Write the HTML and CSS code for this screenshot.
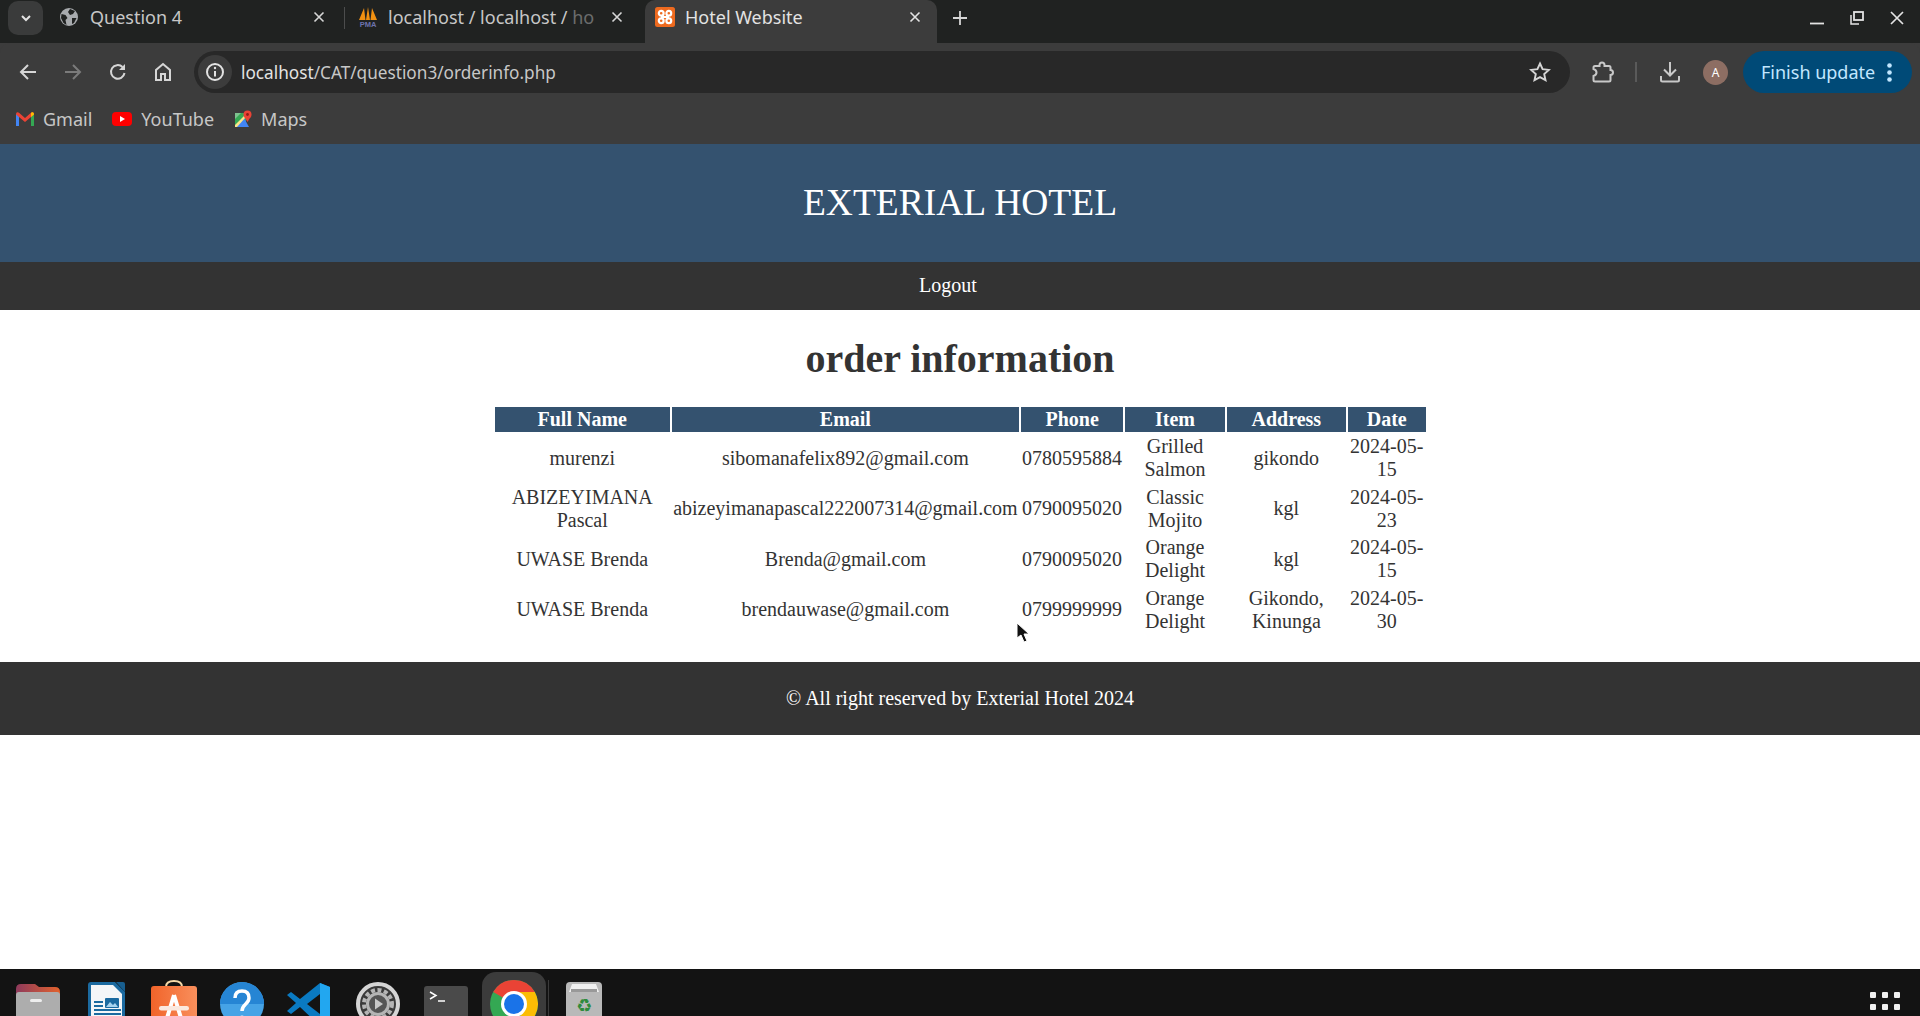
FILE: index.html
```html
<!DOCTYPE html>
<html lang="en">
<head>
<meta charset="utf-8">
<title>Hotel Website</title>
<link rel="stylesheet" href="styles.css">
</head>
<body>
<div class="screen">
  <div class="browser">
    <div class="tabstrip">
      <div class="tablist-btn"><svg width="14" height="14" viewBox="0 0 14 14"><path d="M3 5l4 4 4-4" fill="none" stroke="#e3e3e3" stroke-width="2"/></svg></div>
      <div class="tab tab-one">
        <svg class="favicon" width="18" height="18" viewBox="0 0 18 18"><circle cx="9" cy="9" r="9" fill="#a8abae"/><path d="M1.500 6l4 1 2 3-2 2 1 5-3-2-2.500-5zM10 1l5 2-2 3-3 1-2-3zM12 10l4.500 0-2.500 5-2 1z" fill="#202221"/></svg>
        <span class="tab-title">Question 4</span>
        <svg class="close" width="12" height="12" viewBox="0 0 12 12"><path d="M1.500 1.500l9 9M10.500 1.500l-9 9" stroke="#d6d6d6" stroke-width="1.600"/></svg>
      </div>
      <div class="tab-sep"></div>
      <div class="tab tab-two">
        <svg class="favicon" width="20" height="20" viewBox="0 0 20 20"><path d="M1 13L6 1l1.500 12zM8 13L10 0l2 13zM12.500 13L14 1l5 12z" fill="#f29111"/><text class="pma" x="10" y="19.500" text-anchor="middle">PMA</text></svg>
        <span class="tab-title">localhost / localhost / <span class="faded">ho</span></span>
        <svg class="close" width="12" height="12" viewBox="0 0 12 12"><path d="M1.500 1.500l9 9M10.500 1.500l-9 9" stroke="#d6d6d6" stroke-width="1.600"/></svg>
      </div>
      <div class="tab tab-active">
        <svg class="favicon" width="20" height="20" viewBox="0 0 20 20"><rect width="20" height="20" rx="2.500" fill="#ee6a1f"/><g fill="none" stroke="#fff" stroke-width="2.200"><circle cx="6.200" cy="6.200" r="2.400"/><circle cx="13.800" cy="6.200" r="2.400"/><circle cx="6.200" cy="13.800" r="2.400"/><circle cx="13.800" cy="13.800" r="2.400"/></g><path d="M6 10h8" stroke="#fff" stroke-width="2"/></svg>
        <span class="tab-title bright">Hotel Website</span>
        <svg class="close" width="12" height="12" viewBox="0 0 12 12"><path d="M1.500 1.500l9 9M10.500 1.500l-9 9" stroke="#e3e3e3" stroke-width="1.600"/></svg>
      </div>
      <svg class="newtab" width="14" height="14" viewBox="0 0 14 14"><path d="M7 0v14M0 7h14" stroke="#d6d6d6" stroke-width="1.800"/></svg>
      <div class="winctl">
        <svg width="14" height="14" viewBox="0 0 14 14"><path d="M0 12.500h14" stroke="#e3e3e3" stroke-width="1.800"/></svg>
        <svg width="14" height="14" viewBox="0 0 14 14"><path d="M1 4v9h8" fill="none" stroke="#e3e3e3" stroke-width="1.500"/><rect x="4" y="1" width="9" height="8" fill="none" stroke="#e3e3e3" stroke-width="1.800"/></svg>
        <svg width="14" height="14" viewBox="0 0 14 14"><path d="M1 1l12 12M13 1L1 13" stroke="#e3e3e3" stroke-width="1.700"/></svg>
      </div>
    </div>
    <div class="toolbar">
      <svg class="nav-icon" width="20" height="20" viewBox="0 0 20 20"><path d="M18 10H3M10 3l-7 7 7 7" fill="none" stroke="#d6d6d6" stroke-width="2"/></svg>
      <svg class="nav-icon" width="20" height="20" viewBox="0 0 20 20"><path d="M2 10h15M10 3l7 7-7 7" fill="none" stroke="#7b7b7b" stroke-width="2"/></svg>
      <svg class="nav-icon" width="20" height="20" viewBox="0 0 20 20"><path d="M16.500 11a6.800 6.800 0 1 1-2-6" fill="none" stroke="#d6d6d6" stroke-width="2"/><path d="M17 2v6h-6z" fill="#d6d6d6"/></svg>
      <svg class="nav-icon" width="20" height="20" viewBox="0 0 20 20"><path d="M3 18V8l7-6 7 6v10h-5v-6H8v6z" fill="none" stroke="#d6d6d6" stroke-width="2"/></svg>
      <div class="omnibox">
        <div class="site-info"><svg width="20" height="20" viewBox="0 0 20 20"><circle cx="10" cy="10" r="8" fill="none" stroke="#e3e3e3" stroke-width="2"/><path d="M10 9v5.500" stroke="#e3e3e3" stroke-width="2"/><circle cx="10" cy="6" r="1.200" fill="#e3e3e3"/></svg></div>
        <span class="url"><span class="url-host">localhost</span>/CAT/question3/orderinfo.php</span>
        <svg class="star" width="22" height="22" viewBox="0 0 22 22"><path d="M11 2.500l2.600 5.700 6.200.7-4.600 4.200 1.300 6.100L11 16.100l-5.500 3.100 1.300-6.100-4.600-4.200 6.200-.7z" fill="none" stroke="#d6d6d6" stroke-width="1.900"/></svg>
      </div>
      <svg class="ext" width="22" height="22" viewBox="0 0 22 22"><path d="M3 5h4.500V4a2.500 2.500 0 0 1 5 0v1H17q1.500 0 1.500 1.500V9a2.500 2.500 0 0 1 0 5v5q0 1.500-1.500 1.500H3q-1.500 0-1.500-1.500v-4q3-1 3-3.500t-3-3.500V6.500Q1.500 5 3 5z" fill="none" stroke="#c8c8c8" stroke-width="2"/></svg>
      <div class="tool-sep"></div>
      <svg class="dl" width="22" height="22" viewBox="0 0 22 22"><path d="M11 1v13M5 8.500l6 6 6-6M2 15v4q0 1.500 1.500 1.500h15Q20 20.500 20 19v-4" fill="none" stroke="#c8c8c8" stroke-width="2"/></svg>
      <div class="avatar">A</div>
      <div class="update"><span>Finish update</span><svg width="5" height="19" viewBox="0 0 5 19"><circle cx="2.500" cy="2.500" r="2.300" fill="#c2e7ff"/><circle cx="2.500" cy="9.500" r="2.300" fill="#c2e7ff"/><circle cx="2.500" cy="16.500" r="2.300" fill="#c2e7ff"/></svg></div>
    </div>
    <div class="bookmarks">
      <div class="bookmark"><svg width="18" height="14" viewBox="0 0 18 14"><path d="M0 14V2l3 .5V14z" fill="#4285f4"/><path d="M18 14V2l-3 .5V14z" fill="#34a853"/><path d="M0 2.500C0 0 2 0 3 .8L9 6l6-5.200C16 0 18 0 18 2.500L9 10z" fill="#ea4335"/><path d="M15 .8C16 0 18 0 18 2.500l-3 2.500z" fill="#fbbc04"/></svg><span>Gmail</span></div>
      <div class="bookmark"><svg width="20" height="14" viewBox="0 0 20 14"><rect width="20" height="14" rx="4" fill="#f00"/><path d="M8 4l5 3-5 3z" fill="#fff"/></svg><span>YouTube</span></div>
      <div class="bookmark"><svg width="18" height="18" viewBox="0 0 18 18"><path d="M1 3h11v14H1z" fill="#34a853"/><path d="M1 17L10 8l5 9z" fill="#4285f4"/><path d="M1 15L12 4v3L3 17H1z" fill="#fbe58a"/><path d="M1 3h6L1 9z" fill="#7ec28f"/><circle cx="13.500" cy="4.500" r="4" fill="#ea4335"/><circle cx="13.500" cy="4.500" r="1.400" fill="#8a1f17"/><path d="M10.500 7l3 5 3-5z" fill="#ea4335"/></svg><span>Maps</span></div>
    </div>
  </div>

  <main class="page">
    <header class="site-header"><h1>EXTERIAL HOTEL</h1></header>
    <nav class="site-nav"><a class="nav-link">Logout</a></nav>
    <section class="content">
      <h2>order information</h2>
      <table class="orders">
        <thead>
          <tr><th class="c-name">Full Name</th><th class="c-email">Email</th><th class="c-phone">Phone</th><th class="c-item">Item</th><th class="c-addr">Address</th><th class="c-date">Date</th></tr>
        </thead>
        <tbody>
          <tr><td>murenzi</td><td>sibomanafelix892@gmail.com</td><td>0780595884</td><td>Grilled Salmon</td><td>gikondo</td><td>2024-05-15</td></tr>
          <tr><td>ABIZEYIMANA Pascal</td><td>abizeyimanapascal222007314@gmail.com</td><td>0790095020</td><td>Classic Mojito</td><td>kgl</td><td>2024-05-23</td></tr>
          <tr><td>UWASE Brenda</td><td>Brenda@gmail.com</td><td>0790095020</td><td>Orange Delight</td><td>kgl</td><td>2024-05-15</td></tr>
          <tr><td>UWASE Brenda</td><td>brendauwase@gmail.com</td><td>0799999999</td><td>Orange Delight</td><td>Gikondo, Kinunga</td><td>2024-05-30</td></tr>
        </tbody>
      </table>
    </section>
    <footer class="site-footer">© All right reserved by Exterial Hotel 2024</footer>
  </main>

  <div class="dock">
    <div class="dock-item"><svg width="48" height="48" viewBox="0 0 48 48"><defs><linearGradient id="folderback" x1="0" x2="1" y1="0" y2="0"><stop offset="0" stop-color="#8e3a5c"/><stop offset="1" stop-color="#e2622d"/></linearGradient></defs><path d="M2 9q0-5 5-5h14l4 3h16q5 0 5 5v10H2z" fill="url(#folderback)"/><path d="M2 15q0-3 3-3h38q3 0 3 3v33H2z" fill="#adadad"/><rect x="16" y="19" width="12" height="3" rx="1.500" fill="#eee"/></svg></div>
    <div class="dock-item"><svg width="48" height="48" viewBox="0 0 48 48"><path d="M6 5q0-3 3-3h24l10 10v36H6z" fill="#1b6aa0"/><path d="M9 5h22l9 9v34H9z" fill="#f4f6f8"/><path d="M34 2h7q2 0 2 2v8z" fill="#185f90"/><path d="M12 21h9v2h-9zM12 25h9v2h-9zM12 29h27v2H12zM12 33h27v2H12zM12 37h27v2H12z" fill="#1b6aa0"/><rect x="23" y="18" width="14" height="10" rx="1" fill="#1b6aa0"/><path d="M24 27l4-5 3 3 2-2 3 4z" fill="#a8d4ef"/></svg></div>
    <div class="dock-item"><svg width="48" height="48" viewBox="0 0 48 48"><defs><linearGradient id="bag" x1="0" x2="1" y1="0" y2="0"><stop offset="0" stop-color="#f1642a"/><stop offset="1" stop-color="#f98f5c"/></linearGradient></defs><path d="M16 10V7q0-6 8-6t8 6v3" fill="none" stroke="#f6d9a8" stroke-width="2"/><path d="M4 6h40q3 0 3 3v39H1V9q0-3 3-3z" fill="url(#bag)"/><path d="M24 15L14 48M24 15l10 33" fill="none" stroke="#fff" stroke-width="4"/><rect x="9" y="26" width="30" height="4.500" rx="2.200" fill="#fbe9df"/></svg></div>
    <div class="dock-item"><svg width="48" height="48" viewBox="0 0 48 48"><circle cx="24" cy="24" r="22" fill="#46a3e6"/><path d="M2 24a22 22 0 0 1 44 0z" fill="#2685d4"/><path d="M17 18q0-7 7-7t7 7c0 6-7 6-7 13" fill="none" stroke="#fff" stroke-width="3.500"/><circle cx="24" cy="38" r="2.500" fill="#fff"/></svg></div>
    <div class="dock-item"><svg width="48" height="48" viewBox="0 0 48 48"><path d="M34 3l10 4v34l-10 5L14 27 5 34l-4-3 9-8-9-8 4-3 9 7z" fill="#0a7ac2"/><path d="M34 3l10 4v34l-10 5z" fill="#22a7f0"/><path d="M34 14v20l-13-10z" fill="#131313"/></svg></div>
    <div class="dock-item"><svg width="48" height="48" viewBox="0 0 48 48"><circle cx="24" cy="24" r="20" fill="#3a3a3a" stroke="#d5d5d5" stroke-width="4"/><circle cx="24" cy="24" r="14" fill="none" stroke="#b5b5b5" stroke-width="4" stroke-dasharray="4 2.500"/><circle cx="24" cy="24" r="10.500" fill="#555" stroke="#b5b5b5" stroke-width="3"/><path d="M21 18.500l8 5.500-8 5.500z" fill="#c8c8c8"/></svg></div>
    <div class="dock-item"><svg class="term" width="44" height="44" viewBox="0 0 44 44"><rect width="44" height="44" rx="3" fill="#4a4a4a"/><path d="M6 6l6 3.500-6 3.500" fill="none" stroke="#fff" stroke-width="1.500"/><path d="M14 15h7" stroke="#fff" stroke-width="1.500"/></svg></div>
    <div class="dock-item dock-active"><svg width="48" height="48" viewBox="0 0 48 48"><circle cx="24" cy="24" r="24" fill="#34a853"/><path d="M24 0a24 24 0 0 1 20.800 12H24a12 12 0 0 0-10.400 6L3.200 12A24 24 0 0 1 24 0z" fill="#ea4335"/><path d="M44.800 12A24 24 0 0 1 22 47.900L34.400 30A12 12 0 0 0 24 12z" fill="#fbbc04"/><circle cx="24" cy="24" r="13" fill="#fff"/><circle cx="24" cy="24" r="10" fill="#1a73e8"/></svg></div>
    <div class="dock-sep"></div>
    <div class="dock-item dock-trash"><svg width="36" height="46" viewBox="0 0 36 46"><rect width="36" height="46" rx="4" fill="#b9b9b9"/><path d="M6 2h24l3 8H3z" fill="#f0f0f0"/><path d="M5 7h26v3H5z" fill="#999"/><text class="recycle" x="18" y="30" text-anchor="middle">♻</text></svg></div>
    <div class="apps-grid"><i></i><i></i><i></i><i></i><i></i><i></i><i></i><i></i><i></i></div>
  </div>

  <svg class="cursor" width="14" height="21" viewBox="0 0 14 21"><path d="M1 1v15l4-3 3 7 3-1-3-7h5z" fill="#111" stroke="#fff" stroke-width="1"/></svg>
</div>
</body>
</html>
```

FILE: styles.css
```css
* { box-sizing: border-box; }
html, body { margin: 0; height: 100%; }
body { overflow: hidden; background: #fff; }

.screen {
  position: relative;
  display: flex;
  flex-direction: column;
  height: 1016px;
  overflow: hidden;
}

/* Browser chrome */
.browser { height: 144px; flex: none; font-family: "Noto Sans", sans-serif; background: #3c3c3c; }
.tabstrip {
  height: 43px;
  background: #202221;
  display: flex;
  align-items: flex-start;
  padding-left: 8px;
  position: relative;
}
.tablist-btn {
  width: 35px;
  height: 34px;
  margin-top: 1px;
  border-radius: 10px;
  background: #3a3b3b;
  display: flex;
  align-items: center;
  justify-content: center;
  flex: none;
}
.tab {
  height: 43px;
  display: flex;
  align-items: center;
  padding-bottom: 9px;
  flex: none;
}
.tab-title { font-size: 18px; color: #c7c7c7; white-space: nowrap; }
.tab-title.bright { color: #e3e3e3; }
.faded { opacity: 0.45; }
.tab-one { width: 300px; padding-left: 17px; }
.tab-one .favicon { margin-right: 12px; }
.tab-one .tab-title { flex: 1; }
.tab-one .close { margin-right: 18px; }
.tab-sep { width: 1px; height: 22px; margin-top: 7px; background: #4c4d4d; flex: none; margin-left: 1px; }
.tab-two { width: 300px; padding-left: 13px; }
.tab-two .favicon { margin-right: 10px; }
.tab-two .close { margin-left: auto; margin-right: 22px; }
.pma { font-family: "Liberation Sans", sans-serif; font-size: 7.500px; font-weight: 700; fill: #6d72ad; }
.tab-active {
  width: 292px;
  background: #3c3c3c;
  border-radius: 10px 10px 0 0;
  padding-left: 10px;
}
.tab-active .favicon { margin-right: 10px; }
.tab-active .tab-title { flex: 1; }
.tab-active .close { margin-right: 16px; }
.newtab { margin: 11px 0 0 16px; flex: none; }
.winctl {
  margin-left: auto;
  margin-top: 11px;
  display: flex;
  gap: 26px;
  padding-right: 16px;
}

.toolbar {
  height: 58px;
  display: flex;
  align-items: center;
  padding: 0 0 0 18px;
  background: #3c3c3c;
  border-radius: 10px 10px 0 0;
}
.nav-icon { flex: none; margin-right: 25px; }
.nav-icon:nth-child(4) { margin-right: 21px; }
.omnibox {
  height: 42px;
  width: 1376px;
  border-radius: 21px;
  background: #282828;
  display: flex;
  align-items: center;
  padding-left: 4px;
  flex: none;
}
.site-info {
  width: 34px;
  height: 34px;
  border-radius: 50%;
  background: #3c3c3c;
  display: flex;
  align-items: center;
  justify-content: center;
  margin-right: 9px;
}
.url { font-size: 17.200px; color: #c7c7c7; flex: 1; }
.url-host { color: #e3e3e3; }
.star { margin-right: 19px; }
.ext { margin-left: 22px; flex: none; }
.tool-sep { width: 2px; height: 20px; background: #5a5a5a; margin-left: 21px; flex: none; }
.dl { margin-left: 22px; flex: none; }
.avatar {
  width: 25px;
  height: 25px;
  border-radius: 50%;
  background: #8d6e63;
  color: #fff;
  font-size: 12px;
  display: flex;
  align-items: center;
  justify-content: center;
  margin-left: 22px;
  flex: none;
}
.update {
  width: 169px;
  height: 42px;
  border-radius: 21px;
  background: #004a77;
  color: #c2e7ff;
  font-size: 18px;
  display: flex;
  align-items: center;
  padding-left: 18px;
  margin-left: 15px;
  flex: none;
}
.update span { flex: 1; }
.update svg { margin-right: 20px; }

.bookmarks {
  height: 43px;
  display: flex;
  align-items: center;
  padding: 0 0 8px 16px;
  gap: 20px;
  font-size: 18px;
  color: #c7c7c7;
}
.bookmark { display: flex; align-items: center; gap: 9px; }

/* Page */
.page {
  flex: 1;
  min-height: 0;
  font-family: "Liberation Serif", "Times New Roman", serif;
  font-size: 20px;
  color: #333;
  display: flex;
  flex-direction: column;
}
.site-header {
  height: 118px;
  background: #34526f;
  color: #fff;
  display: flex;
  align-items: center;
  justify-content: center;
  padding-bottom: 2px;
}
.site-header h1 { margin: 0; font-size: 37.500px; font-weight: 400; }
.site-nav {
  height: 48px;
  background: #333;
  display: flex;
  align-items: center;
  justify-content: center;
  padding: 0 24px 1px 0;
}
.nav-link { color: #fff; }
.content { display: flex; flex-direction: column; align-items: center; height: 352px; }
.content h2 { margin: 26px 0 22.500px; font-size: 40px; font-weight: 700; line-height: 46px; color: #333; }
.orders { width: 935px; border-spacing: 2px; border-collapse: separate; margin: 0; text-align: center; }
.orders th { background: #34526f; color: #fff; padding: 1.250px; font-weight: 700; }
.orders td { padding: 1.250px; }
.c-name { width: 176px; }
.c-email { width: 345px; }
.c-phone { width: 102px; }
.c-item { width: 100px; }
.c-addr { width: 120px; }
.c-date { width: 78px; }
.site-footer {
  height: 73px;
  background: #333;
  color: #fff;
  display: flex;
  align-items: center;
  justify-content: center;
}

/* Dock */
.dock {
  height: 47px;
  flex: none;
  background: #131313;
  display: flex;
  align-items: flex-start;
  padding-left: 4px;
  position: relative;
  overflow: hidden;
}
.dock-item {
  width: 68px;
  height: 48px;
  margin-top: 3px;
  padding-top: 8px;
  display: flex;
  justify-content: center;
  flex: none;
}
.dock-item .term { margin-top: 6px; }
.dock-active { width: 64px; height: 60px; margin-left: 2px; margin-right: 2px; background: #3b3b3b; border-radius: 14px; }
.dock-sep { width: 1px; height: 40px; margin-top: 11px; background: #3a3a3a; flex: none; }
.dock-trash { width: 36px; margin-left: 17px; padding-top: 10px; }
.recycle { font-family: "DejaVu Sans", sans-serif; font-size: 18px; fill: #2e8b3c; }
.apps-grid {
  position: absolute;
  left: 1870px;
  top: 23px;
  display: grid;
  grid-template-columns: repeat(3, 6px);
  grid-auto-rows: 6px;
  gap: 6px;
}
.apps-grid i { background: #eee; border-radius: 1px; display: block; }

.cursor { position: absolute; left: 1016px; top: 622px; }
```
